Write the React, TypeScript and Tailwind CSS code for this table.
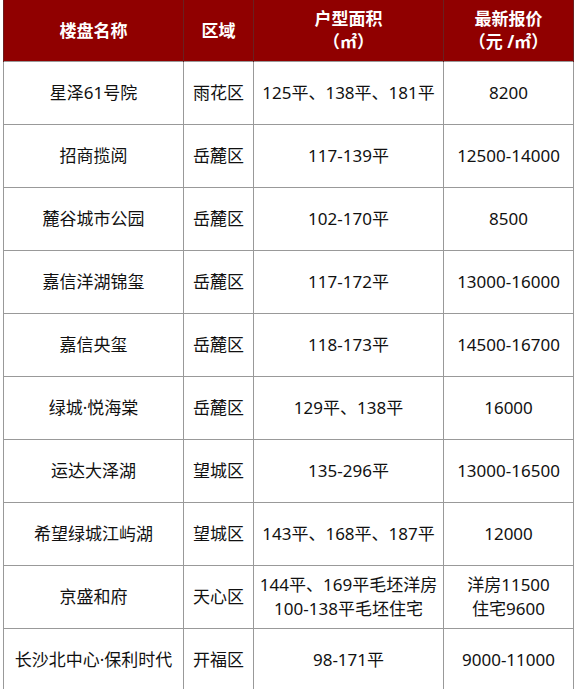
const rows: [string, string, string[], string[]][] = [
  ["星泽61号院", "雨花区", ["125平、138平、181平"], ["8200"]],
  ["招商揽阅", "岳麓区", ["117-139平"], ["12500-14000"]],
  ["麓谷城市公园", "岳麓区", ["102-170平"], ["8500"]],
  ["嘉信洋湖锦玺", "岳麓区", ["117-172平"], ["13000-16000"]],
  ["嘉信央玺", "岳麓区", ["118-173平"], ["14500-16700"]],
  ["绿城·悦海棠", "岳麓区", ["129平、138平"], ["16000"]],
  ["运达大泽湖", "望城区", ["135-296平"], ["13000-16500"]],
  ["希望绿城江屿湖", "望城区", ["143平、168平、187平"], ["12000"]],
  ["京盛和府", "天心区", ["144平、169平毛坯洋房", "100-138平毛坯住宅"], ["洋房11500", "住宅9600"]],
  ["长沙北中心·保利时代", "开福区", ["98-171平"], ["9000-11000"]],
];

function Lines({ lines }: { lines: string[] }) {
  return (
    <>
      {lines.map((l) => (
        <div key={l}>{l}</div>
      ))}
    </>
  );
}

export default function App() {
  return (
    <div className="min-h-[689px] bg-white pl-[3px] font-['Noto_Sans','Noto_Sans_CJK_SC',sans-serif]">
      <table className="w-[570px] table-fixed border-collapse text-[17px] text-[#111]">
        <colgroup>
          <col className="w-[180px]" />
          <col className="w-[70px]" />
          <col className="w-[190px]" />
          <col className="w-[130px]" />
        </colgroup>
        <thead>
          <tr className="h-[61px] bg-[#900000] font-bold leading-[23px] text-white">
            <th className="border-x border-[#6a2020]">楼盘名称</th>
            <th className="border-x border-[#6a2020]">区域</th>
            <th className="border-x border-[#6a2020]">
              <div>户型面积</div>
              <div>（㎡）</div>
            </th>
            <th className="border-x border-[#6a2020]">
              <div>最新报价</div>
              <div>（元 /㎡）</div>
            </th>
          </tr>
        </thead>
        <tbody>
          {rows.map(([name, area, size, price]) => (
            <tr key={name} className="h-[63px] text-center leading-[24px]">
              <td className="border border-[#999] whitespace-nowrap">{name}</td>
              <td className="border border-[#999]">{area}</td>
              <td className="border border-[#999] whitespace-nowrap">
                <Lines lines={size} />
              </td>
              <td className="border border-[#999]">
                <Lines lines={price} />
              </td>
            </tr>
          ))}
        </tbody>
      </table>
    </div>
  );
}
